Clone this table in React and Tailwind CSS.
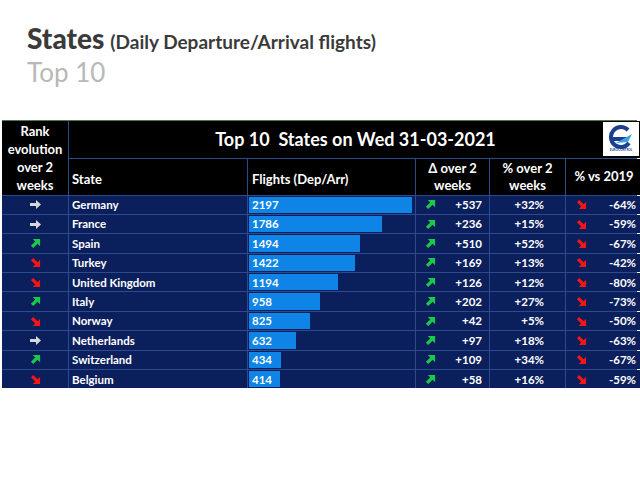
const ROWS = [
  { trend: "flat", state: "Germany", flights: 2197, delta: "+537", pct: "+32%", vs: "-64%" },
  { trend: "flat", state: "France", flights: 1786, delta: "+236", pct: "+15%", vs: "-59%" },
  { trend: "up", state: "Spain", flights: 1494, delta: "+510", pct: "+52%", vs: "-67%" },
  { trend: "down", state: "Turkey", flights: 1422, delta: "+169", pct: "+13%", vs: "-42%" },
  { trend: "down", state: "United Kingdom", flights: 1194, delta: "+126", pct: "+12%", vs: "-80%" },
  { trend: "up", state: "Italy", flights: 958, delta: "+202", pct: "+27%", vs: "-73%" },
  { trend: "down", state: "Norway", flights: 825, delta: "+42", pct: "+5%", vs: "-50%" },
  { trend: "flat", state: "Netherlands", flights: 632, delta: "+97", pct: "+18%", vs: "-63%" },
  { trend: "up", state: "Switzerland", flights: 434, delta: "+109", pct: "+34%", vs: "-67%" },
  { trend: "down", state: "Belgium", flights: 414, delta: "+58", pct: "+16%", vs: "-59%" },
];

const MAX = 2197;
const BAR_MAX = 163;

function Arrow({ kind }) {
  if (kind === "flat") {
    return (
      <svg width="13" height="11" viewBox="0 0 13 11">
        <path d="M1 4h6V1l5 4.5L7 10V7H1z" fill="#d8d8d8" />
      </svg>
    );
  }
  if (kind === "up") {
    return (
      <svg width="11" height="11" viewBox="0 0 12 12">
        <path d="M3 1h8v8L8.3 6.3 3.5 11 1 8.5l4.7-4.8z" fill="#19c94a" />
      </svg>
    );
  }
  return (
    <svg width="11" height="11" viewBox="0 0 12 12">
      <path d="M3 11h8V3L8.3 5.7 3.5 1 1 3.5l4.7 4.8z" fill="#f21616" />
    </svg>
  );
}

function Logo() {
  return (
    <div className="flex h-[34px] w-[36px] flex-col items-center justify-center bg-white">
      <svg width="26" height="24" viewBox="0 0 26 24">
        <path d="M20 5a10 10 0 1 0 1 13" fill="none" stroke="#1d3f8f" strokeWidth="4" />
        <path d="M3 12h19l-6 4H3z" fill="#1d3f8f" />
        <path d="M8 18l16-9-4 8z" fill="#3da3e0" />
      </svg>
      <div className="text-[3px] leading-none text-[#1d3f8f]">EUROCONTROL</div>
    </div>
  );
}

export default function App() {
  return (
    <div className="h-[480px] w-[640px] bg-white font-['Lato',sans-serif]">
      <div className="pl-[27px] pt-[22px]">
        <div className="flex items-baseline gap-[6px] text-[#3a3a3a]">
          <span className="text-[28px] font-black leading-[32px]">States</span>
          <span className="text-[19px] font-bold">(Daily Departure/Arrival flights)</span>
        </div>
        <div className="text-[26px] leading-[30px] text-[#b8b8b8]">Top 10</div>
      </div>

      <div className="ml-[2px] mt-[33px] w-[635px] border-t border-[#4d7a52]">
        <div className="grid grid-cols-[66px_178px_167px_73px_75px_76px] grid-rows-[37px_36px_repeat(10,18.4px)] gap-px bg-[#2c4b8c] text-white">
          <div className="row-span-2 flex flex-col items-center justify-center bg-black text-center text-[13px] font-bold leading-[18px]">
            <span>Rank</span>
            <span>evolution</span>
            <span>over 2</span>
            <span>weeks</span>
          </div>
          <div className="relative col-span-5 flex items-center justify-center bg-black text-[18px] font-bold">
            <span className="whitespace-pre">Top 10  States on Wed 31-03-2021</span>
            <div className="absolute right-[3px] top-[1px]">
              <Logo />
            </div>
          </div>
          <div className="flex items-center bg-black pl-[3px] pt-[6px] text-[13px] font-bold">State</div>
          <div className="flex items-center bg-black pl-[4px] pt-[6px] text-[13px] font-bold">Flights (Dep/Arr)</div>
          <div className="flex flex-col items-center justify-center bg-black text-center text-[13px] font-bold leading-[17px]">
            <span>Δ over 2</span>
            <span>weeks</span>
          </div>
          <div className="flex flex-col items-center justify-center bg-black text-center text-[13px] font-bold leading-[17px]">
            <span>% over 2</span>
            <span>weeks</span>
          </div>
          <div className="flex items-center justify-center bg-black text-[13px] font-bold">% vs 2019</div>

          {ROWS.map((r) => (
            <Row key={r.state} r={r} />
          ))}
        </div>
      </div>
    </div>
  );
}

function Row({ r }) {
  const w = Math.round((r.flights / MAX) * BAR_MAX);
  return (
    <>
      <div className="flex items-center justify-center bg-[#0b1f5d]">
        <Arrow kind={r.trend} />
      </div>
      <div className="flex items-center bg-[#0b1f5d] pl-[3px] text-[11.5px] font-bold">{r.state}</div>
      <div className="flex items-stretch bg-[#0b1f5d] py-px pl-px">
        <div className="flex items-center bg-[#0d84e6] pl-[3px] text-[11.5px] font-bold" style={{ width: w }}>
          {r.flights}
        </div>
      </div>
      <div className="flex items-center justify-between bg-[#0b1f5d] pl-[9px] pr-[7px] text-[11.5px] font-bold">
        <Arrow kind="up" />
        <span>{r.delta}</span>
      </div>
      <div className="flex items-center justify-end bg-[#0b1f5d] pr-[21px] text-[11.5px] font-bold">{r.pct}</div>
      <div className="flex items-center justify-between bg-[#0b1f5d] pl-[10px] pr-[6px] text-[11.5px] font-bold">
        <Arrow kind="down" />
        <span>{r.vs}</span>
      </div>
    </>
  );
}
